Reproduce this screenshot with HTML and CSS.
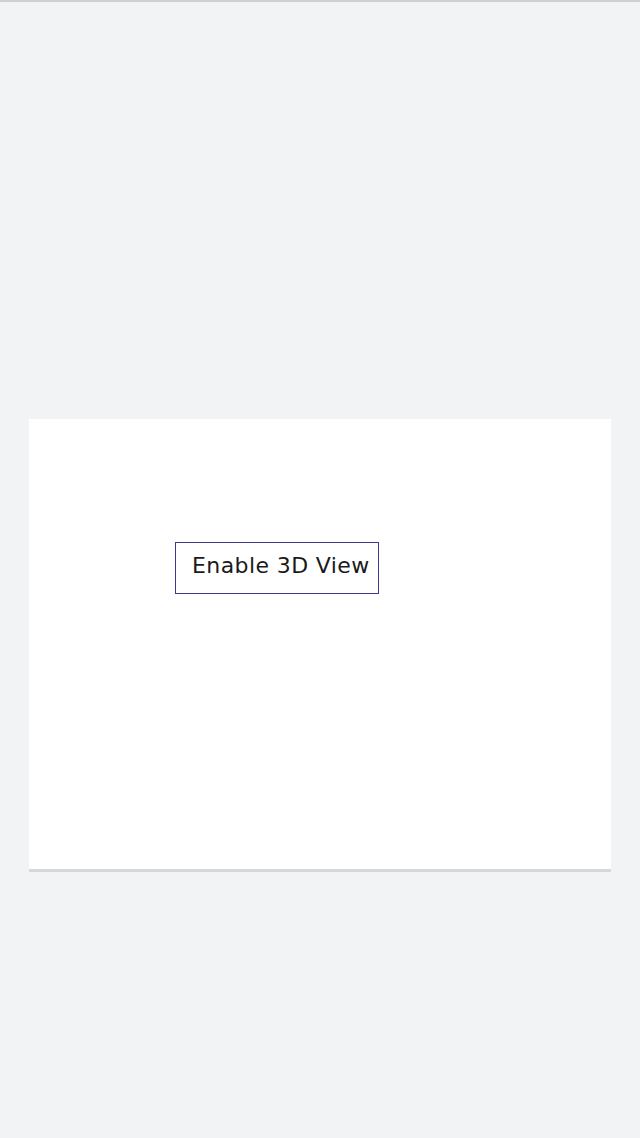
FILE: index.html
```html
<!DOCTYPE html>
<html lang="en">
<head>
    <meta charset="UTF-8">
    <meta name="viewport" content="width=device-width, initial-scale=1.0">
    <title>3D View</title>
    <link rel="stylesheet" href="styles.css">
</head>
<body>
    <div class="top-line"></div>
    <main class="page">
        <div class="panel">
            <button class="toggle-btn">Enable 3D View</button>
        </div>
    </main>
</body>
</html>
```

FILE: styles.css
```css
body {
  margin: 0;
  padding: 0;
  background: #f2f3f5;
  font-family: 'DejaVu Sans', sans-serif;
}
.top-line {
  height: 2px;
  background: #cfd0d3;
}
.page {
  padding: 417px 29px 0 29px;
}
.panel {
  background: #ffffff;
  height: 453px;
  border-bottom: 3px solid #d6d7d9;
  padding: 123px 0 0 146px;
  box-sizing: border-box;
}
.toggle-btn {
  display: block;
  width: 204px;
  height: 52px;
  background: #ffffff;
  border: 1px solid #3b3a8c;
  color: #1a1a1a;
  font-family: 'DejaVu Sans', sans-serif;
  font-size: 22px;
  letter-spacing: 0.4px;
  font-weight: normal;
  padding: 0 0 5px 16px;
  text-align: left;
  white-space: nowrap;
  cursor: pointer;
}
```
